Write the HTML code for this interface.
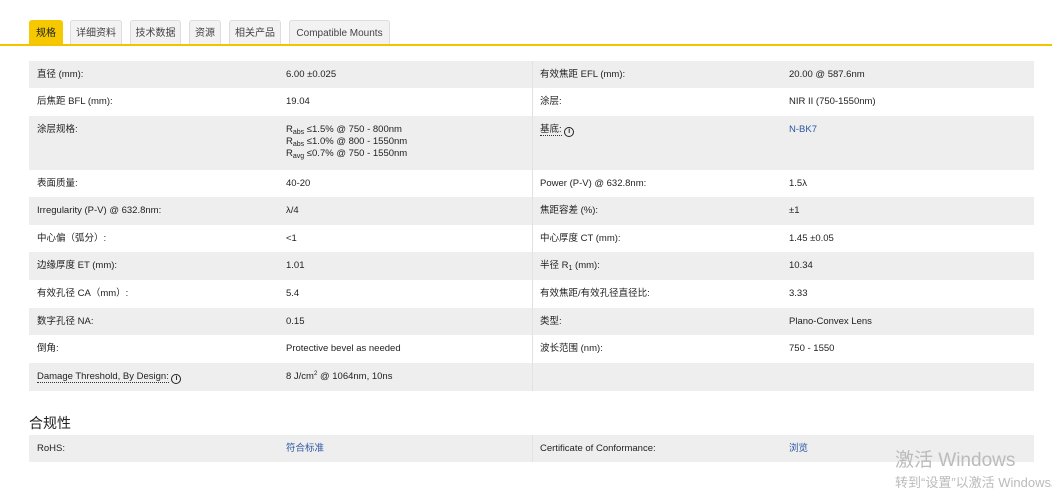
<!DOCTYPE html><html><head><meta charset="utf-8"><style>
body{margin:0;width:1052px;height:490px;background:#fff;font-family:"Liberation Sans","Noto Sans CJK SC",sans-serif;font-size:9.5px;color:#222;position:relative;overflow:hidden}
.tab{position:absolute;top:20px;height:24px;line-height:25px;font-size:10px;text-align:center;background:#f2f2f2;border:1px solid #ddd;border-bottom:none;border-radius:3px 3px 0 0;color:#444;box-sizing:border-box}
.tab.a{background:#f6c800;border-color:#f6c800;color:#222}
.line{position:absolute;top:44px;left:0;width:1052px;height:2px;background:#f3c300}
.row{position:absolute;left:29px;width:1005px}
.row.g{background:#eeeeee}
.c{position:absolute;top:8px;line-height:12px}
.vd{position:absolute;left:532px;top:61px;width:1px;height:330px;background:#e2e2e2}
a{color:#2b57a0;text-decoration:none}
sub{font-size:7px;vertical-align:-2px;line-height:0}
sup{font-size:6px;vertical-align:4px;line-height:0}
.u{border-bottom:1px dotted #333}
.i{display:inline-block;width:8px;height:8px;border:1px solid #222;border-radius:50%;font-size:7px;line-height:8px;text-align:center;font-weight:bold;vertical-align:-1px}
</style></head><body>
<div class="tab a" style="left:29px;width:34px">规格</div>
<div class="tab" style="left:70px;width:52px">详细资料</div>
<div class="tab" style="left:130px;width:51px">技术数据</div>
<div class="tab" style="left:189px;width:32px">资源</div>
<div class="tab" style="left:229px;width:52px">相关产品</div>
<div class="tab" style="left:289px;width:101px">Compatible Mounts</div>
<div class="line"></div>

<div class="row g" style="top:61px;height:27px"><span class="c" style="left:8px">直径 (mm):</span><span class="c" style="left:257px">6.00 ±0.025</span><span class="c" style="left:511px">有效焦距 EFL (mm):</span><span class="c" style="left:760px">20.00 @ 587.6nm</span></div>
<div class="row" style="top:88px;height:28px"><span class="c" style="left:8px">后焦距 BFL (mm):</span><span class="c" style="left:257px">19.04</span><span class="c" style="left:511px">涂层:</span><span class="c" style="left:760px">NIR II (750-1550nm)</span></div>
<div class="row g" style="top:116px;height:54px"><span class="c" style="left:8px">涂层规格:</span><span class="c" style="left:257px">R<sub>abs</sub> ≤1.5% @ 750 - 800nm<br>R<sub>abs</sub> ≤1.0% @ 800 - 1550nm<br>R<sub>avg</sub> ≤0.7% @ 750 - 1550nm</span><span class="c" style="left:511px"><span class="u">基底:</span> <span class="i">i</span></span><span class="c" style="left:760px"><a>N-BK7</a></span></div>
<div class="row" style="top:170px;height:27px"><span class="c" style="left:8px">表面质量:</span><span class="c" style="left:257px">40-20</span><span class="c" style="left:511px">Power (P-V) @ 632.8nm:</span><span class="c" style="left:760px">1.5λ</span></div>
<div class="row g" style="top:197px;height:28px"><span class="c" style="left:8px">Irregularity (P-V) @ 632.8nm:</span><span class="c" style="left:257px">λ/4</span><span class="c" style="left:511px">焦距容差 (%):</span><span class="c" style="left:760px">±1</span></div>
<div class="row" style="top:225px;height:27px"><span class="c" style="left:8px">中心偏（弧分）:</span><span class="c" style="left:257px">&lt;1</span><span class="c" style="left:511px">中心厚度 CT (mm):</span><span class="c" style="left:760px">1.45 ±0.05</span></div>
<div class="row g" style="top:252px;height:28px"><span class="c" style="left:8px">边缘厚度 ET (mm):</span><span class="c" style="left:257px">1.01</span><span class="c" style="left:511px">半径 R<sub>1</sub> (mm):</span><span class="c" style="left:760px">10.34</span></div>
<div class="row" style="top:280px;height:28px"><span class="c" style="left:8px">有效孔径 CA（mm）:</span><span class="c" style="left:257px">5.4</span><span class="c" style="left:511px">有效焦距/有效孔径直径比:</span><span class="c" style="left:760px">3.33</span></div>
<div class="row g" style="top:308px;height:27px"><span class="c" style="left:8px">数字孔径 NA:</span><span class="c" style="left:257px">0.15</span><span class="c" style="left:511px">类型:</span><span class="c" style="left:760px">Plano-Convex Lens</span></div>
<div class="row" style="top:335px;height:28px"><span class="c" style="left:8px">倒角:</span><span class="c" style="left:257px">Protective bevel as needed</span><span class="c" style="left:511px">波长范围 (nm):</span><span class="c" style="left:760px">750 - 1550</span></div>
<div class="row g" style="top:363px;height:28px"><span class="c" style="left:8px"><span class="u">Damage Threshold, By Design:</span> <span class="i">i</span></span><span class="c" style="left:257px">8 J/cm<sup>2</sup> @ 1064nm, 10ns</span></div>
<div class="vd"></div>

<div style="position:absolute;left:29px;top:413px;font-size:14px">合规性</div>
<div class="row g" style="top:435px;height:27px"><span class="c" style="left:8px">RoHS:</span><span class="c" style="left:257px"><a>符合标准</a></span><span class="c" style="left:511px">Certificate of Conformance:</span><span class="c" style="left:760px"><a>浏览</a></span></div>
<div style="position:absolute;left:532px;top:435px;width:1px;height:27px;background:#e2e2e2"></div>

<div style="position:absolute;left:895px;top:445px;font-size:19px;color:#bbb">激活 Windows</div>
<div style="position:absolute;left:895px;top:472px;font-size:13px;color:#bbb;white-space:nowrap">转到“设置”以激活 Windows。</div>
</body></html>
